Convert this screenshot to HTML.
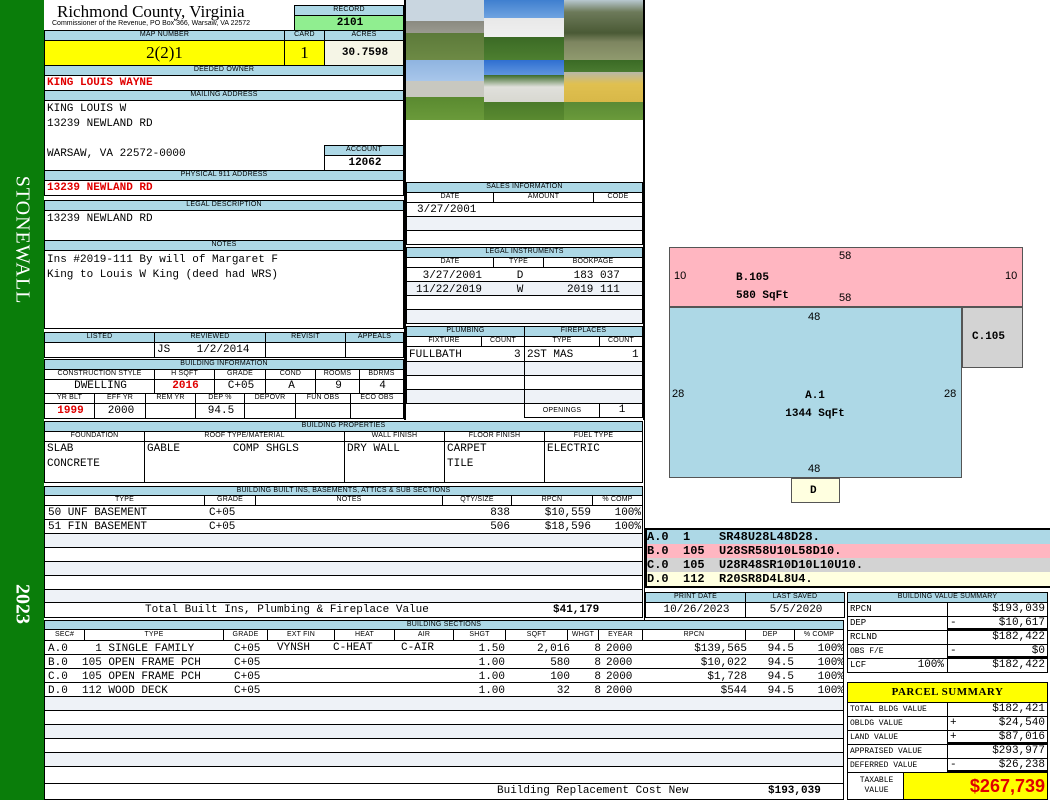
<!DOCTYPE html>
<html><head><meta charset="utf-8"><style>
*{margin:0;padding:0}
body{width:1050px;height:800px;position:relative;background:#fff;overflow:hidden;font-family:"Liberation Sans",sans-serif}
.b{position:absolute;box-sizing:border-box;border:1px solid #000;overflow:hidden;white-space:nowrap}
.h{background:#add8e6;font-size:7px;text-align:center;line-height:8px;letter-spacing:0.2px}
.m{font-family:"Liberation Mono",monospace;font-size:11px;line-height:12px;padding-left:2px}
.r{text-align:right;padding-right:2px}
.c{text-align:center}
.red{color:#e00000;font-weight:bold}
.a{position:absolute;white-space:nowrap}
.alt{background:#eef2f7}
.sk{font-family:"Liberation Mono",monospace;font-weight:bold;font-size:11px}
</style></head><body>
<div class="a" style="left:0;top:0;width:44px;height:800px;background:#0a7d0a"></div>
<div class="a" style="left:22px;top:240px;transform:translate(-50%,-50%) rotate(90deg);color:#fff;font:20px 'Liberation Serif',serif;letter-spacing:1px">STONEWALL</div>
<div class="a" style="left:22px;top:604px;transform:translate(-50%,-50%) rotate(90deg);color:#fff;font:bold 20px 'Liberation Serif',serif">2023</div>

<div class="a" style="left:57px;top:2px;font:17px 'Liberation Serif',serif">Richmond County, Virginia</div>
<div class="a" style="left:52px;top:20px;font:7px 'Liberation Sans'">Commissioner of the Revenue, PO Box 366, Warsaw, VA 22572</div>
<div class="b h" style="left:294px;top:5px;width:110px;height:11px">RECORD</div>
<div class="b m c" style="left:294px;top:15px;width:110px;height:16px;background:#90ee90;font-weight:bold;line-height:14px">2101</div>
<div class="b h" style="left:44px;top:30px;width:241px;height:11px">MAP NUMBER</div>
<div class="b h" style="left:284px;top:30px;width:41px;height:11px">CARD</div>
<div class="b h" style="left:324px;top:30px;width:80px;height:11px">ACRES</div>
<div class="b c" style="left:44px;top:40px;width:241px;height:26px;background:#ffff00;font:17px 'Liberation Serif',serif;line-height:24px">2(2)1</div>
<div class="b c" style="left:284px;top:40px;width:41px;height:26px;background:#ffff00;font:17px 'Liberation Serif',serif;line-height:24px">1</div>
<div class="b m c" style="left:324px;top:40px;width:80px;height:26px;background:#f5f5e6;font-weight:bold;line-height:24px">30.7598</div>
<div class="b h" style="left:44px;top:65px;width:360px;height:11px">DEEDED OWNER</div>
<div class="b m red" style="left:44px;top:75px;width:360px;height:16px;line-height:15px">KING LOUIS WAYNE</div>
<div class="b h" style="left:44px;top:90px;width:360px;height:11px">MAILING ADDRESS</div>
<div class="b m" style="left:44px;top:100px;width:360px;height:71px;line-height:15px;padding-top:1px">KING LOUIS W<br>13239 NEWLAND RD<br><br>WARSAW, VA 22572-0000</div>
<div class="b h" style="left:324px;top:145px;width:80px;height:11px">ACCOUNT</div>
<div class="b m c" style="left:324px;top:155px;width:80px;height:16px;font-weight:bold;line-height:14px">12062</div>
<div class="b h" style="left:44px;top:170px;width:360px;height:11px">PHYSICAL 911 ADDRESS</div>
<div class="b m red" style="left:44px;top:180px;width:360px;height:16px;line-height:15px">13239 NEWLAND RD</div>
<div class="b h" style="left:44px;top:200px;width:360px;height:11px">LEGAL DESCRIPTION</div>
<div class="b m" style="left:44px;top:210px;width:360px;height:31px;padding-top:2px">13239 NEWLAND RD</div>
<div class="b h" style="left:44px;top:240px;width:360px;height:11px">NOTES</div>
<div class="b m" style="left:44px;top:250px;width:360px;height:79px;padding-top:2px;line-height:15px">Ins #2019-111 By will of Margaret F<br>King to Louis W King (deed had WRS)</div>

<div class="b h" style="left:44px;top:332px;width:111px;height:11px">LISTED</div>
<div class="b h" style="left:154px;top:332px;width:112px;height:11px">REVIEWED</div>
<div class="b h" style="left:265px;top:332px;width:81px;height:11px">REVISIT</div>
<div class="b h" style="left:345px;top:332px;width:59px;height:11px">APPEALS</div>
<div class="b m" style="left:44px;top:342px;width:111px;height:16px"></div>
<div class="b m" style="left:154px;top:342px;width:112px;height:16px;line-height:14px">JS&nbsp;&nbsp;&nbsp;&nbsp;1/2/2014</div>
<div class="b m" style="left:265px;top:342px;width:81px;height:16px"></div>
<div class="b m" style="left:345px;top:342px;width:59px;height:16px"></div>

<div class="b h" style="left:44px;top:359px;width:360px;height:11px">BUILDING INFORMATION</div>
<div class="b h" style="left:44px;top:369px;width:111px;height:11px;background:#fff">CONSTRUCTION STYLE</div>
<div class="b h" style="left:154px;top:369px;width:61px;height:11px;background:#fff">H SQFT</div>
<div class="b h" style="left:214px;top:369px;width:52px;height:11px;background:#fff">GRADE</div>
<div class="b h" style="left:265px;top:369px;width:51px;height:11px;background:#fff">COND</div>
<div class="b h" style="left:315px;top:369px;width:45px;height:11px;background:#fff">ROOMS</div>
<div class="b h" style="left:359px;top:369px;width:45px;height:11px;background:#fff">BDRMS</div>
<div class="b m c" style="left:44px;top:379px;width:111px;height:15px">DWELLING</div>
<div class="b m c red" style="left:154px;top:379px;width:61px;height:15px">2016</div>
<div class="b m c" style="left:214px;top:379px;width:52px;height:15px">C+05</div>
<div class="b m c" style="left:265px;top:379px;width:51px;height:15px">A</div>
<div class="b m c" style="left:315px;top:379px;width:45px;height:15px">9</div>
<div class="b m c" style="left:359px;top:379px;width:45px;height:15px">4</div>
<div class="b h" style="left:44px;top:393px;width:51px;height:11px;background:#fff">YR BLT</div>
<div class="b h" style="left:94px;top:393px;width:52px;height:11px;background:#fff">EFF YR</div>
<div class="b h" style="left:145px;top:393px;width:51px;height:11px;background:#fff">REM YR</div>
<div class="b h" style="left:195px;top:393px;width:50px;height:11px;background:#fff">DEP %</div>
<div class="b h" style="left:244px;top:393px;width:52px;height:11px;background:#fff">DEPOVR</div>
<div class="b h" style="left:295px;top:393px;width:56px;height:11px;background:#fff">FUN OBS</div>
<div class="b h" style="left:350px;top:393px;width:54px;height:11px;background:#fff">ECO OBS</div>
<div class="b m c red" style="left:44px;top:403px;width:51px;height:16px;line-height:14px">1999</div>
<div class="b m c" style="left:94px;top:403px;width:52px;height:16px;line-height:14px">2000</div>
<div class="b m" style="left:145px;top:403px;width:51px;height:16px"></div>
<div class="b m c" style="left:195px;top:403px;width:50px;height:16px;line-height:14px">94.5</div>
<div class="b m" style="left:244px;top:403px;width:52px;height:16px"></div>
<div class="b m" style="left:295px;top:403px;width:56px;height:16px"></div>
<div class="b m" style="left:350px;top:403px;width:54px;height:16px"></div>

<div class="b h" style="left:44px;top:421px;width:599px;height:11px">BUILDING PROPERTIES</div>
<div class="b h" style="left:44px;top:431px;width:101px;height:11px;background:#fff">FOUNDATION</div>
<div class="b h" style="left:144px;top:431px;width:201px;height:11px;background:#fff">ROOF TYPE/MATERIAL</div>
<div class="b h" style="left:344px;top:431px;width:101px;height:11px;background:#fff">WALL FINISH</div>
<div class="b h" style="left:444px;top:431px;width:101px;height:11px;background:#fff">FLOOR FINISH</div>
<div class="b h" style="left:544px;top:431px;width:99px;height:11px;background:#fff">FUEL TYPE</div>
<div class="b m" style="left:44px;top:441px;width:101px;height:42px;line-height:15px">SLAB<br>CONCRETE</div>
<div class="b m" style="left:144px;top:441px;width:201px;height:42px;line-height:15px">GABLE&nbsp;&nbsp;&nbsp;&nbsp;&nbsp;&nbsp;&nbsp;&nbsp;COMP SHGLS</div>
<div class="b m" style="left:344px;top:441px;width:101px;height:42px;line-height:15px">DRY WALL</div>
<div class="b m" style="left:444px;top:441px;width:101px;height:42px;line-height:15px">CARPET<br>TILE</div>
<div class="b m" style="left:544px;top:441px;width:99px;height:42px;line-height:15px">ELECTRIC</div>

<div class="b h" style="left:44px;top:486px;width:599px;height:10px">BUILDING BUILT INS, BASEMENTS, ATTICS &amp; SUB SECTIONS</div>
<div class="b h" style="left:44px;top:495px;width:161px;height:11px;background:#fff">TYPE</div>
<div class="b h" style="left:204px;top:495px;width:52px;height:11px;background:#fff">GRADE</div>
<div class="b h" style="left:255px;top:495px;width:188px;height:11px;background:#fff">NOTES</div>
<div class="b h" style="left:442px;top:495px;width:70px;height:11px;background:#fff">QTY/SIZE</div>
<div class="b h" style="left:511px;top:495px;width:82px;height:11px;background:#fff">RPCN</div>
<div class="b h" style="left:592px;top:495px;width:51px;height:11px;background:#fff">% COMP</div>
<div class="b" style="left:44px;top:505px;width:599px;height:15px"></div>
<div class="b" style="left:44px;top:519px;width:599px;height:15px"></div>
<div class="b alt" style="left:44px;top:533px;width:599px;height:15px"></div>
<div class="b" style="left:44px;top:547px;width:599px;height:15px"></div>
<div class="b alt" style="left:44px;top:561px;width:599px;height:15px"></div>
<div class="b" style="left:44px;top:575px;width:599px;height:15px"></div>
<div class="b alt" style="left:44px;top:589px;width:599px;height:14px"></div>
<div class="a m" style="left:46px;top:507px">50 UNF BASEMENT</div>
<div class="a m" style="left:46px;top:521px">51 FIN BASEMENT</div>
<div class="a m" style="left:207px;top:507px">C+05</div>
<div class="a m" style="left:207px;top:521px">C+05</div>
<div class="a m r" style="left:442px;top:507px;width:66px">838</div>
<div class="a m r" style="left:442px;top:521px;width:66px">506</div>
<div class="a m r" style="left:511px;top:507px;width:78px">$10,559</div>
<div class="a m r" style="left:511px;top:521px;width:78px">$18,596</div>
<div class="a m r" style="left:592px;top:507px;width:47px">100%</div>
<div class="a m r" style="left:592px;top:521px;width:47px">100%</div>
<div class="b m" style="left:44px;top:602px;width:599px;height:16px;line-height:15px"><span style="position:absolute;left:100px">Total Built Ins, Plumbing &amp; Fireplace Value</span><span style="position:absolute;left:508px;font-weight:bold">$41,179</span></div>

<div class="b h" style="left:44px;top:620px;width:800px;height:10px">BUILDING SECTIONS</div>
<div class="b h" style="left:44px;top:629px;width:41px;height:12px;background:#fff;line-height:10px">SEC#</div>
<div class="b h" style="left:84px;top:629px;width:140px;height:12px;background:#fff;line-height:10px">TYPE</div>
<div class="b h" style="left:223px;top:629px;width:45px;height:12px;background:#fff;line-height:10px">GRADE</div>
<div class="b h" style="left:267px;top:629px;width:68px;height:12px;background:#fff;line-height:10px">EXT FIN</div>
<div class="b h" style="left:334px;top:629px;width:61px;height:12px;background:#fff;line-height:10px">HEAT</div>
<div class="b h" style="left:394px;top:629px;width:60px;height:12px;background:#fff;line-height:10px">AIR</div>
<div class="b h" style="left:453px;top:629px;width:53px;height:12px;background:#fff;line-height:10px">SHGT</div>
<div class="b h" style="left:505px;top:629px;width:63px;height:12px;background:#fff;line-height:10px">SQFT</div>
<div class="b h" style="left:567px;top:629px;width:32px;height:12px;background:#fff;line-height:10px">WHGT</div>
<div class="b h" style="left:598px;top:629px;width:45px;height:12px;background:#fff;line-height:10px">EYEAR</div>
<div class="b h" style="left:642px;top:629px;width:104px;height:12px;background:#fff;line-height:10px">RPCN</div>
<div class="b h" style="left:745px;top:629px;width:50px;height:12px;background:#fff;line-height:10px">DEP</div>
<div class="b h" style="left:794px;top:629px;width:50px;height:12px;background:#fff;line-height:10px">% COMP</div>
<div class="b" style="left:44px;top:640px;width:800px;height:15px"></div>
<div class="b" style="left:44px;top:654px;width:800px;height:15px"></div>
<div class="b" style="left:44px;top:668px;width:800px;height:15px"></div>
<div class="b" style="left:44px;top:682px;width:800px;height:15px"></div>
<div class="b alt" style="left:44px;top:696px;width:800px;height:15px"></div>
<div class="b" style="left:44px;top:710px;width:800px;height:15px"></div>
<div class="b alt" style="left:44px;top:724px;width:800px;height:15px"></div>
<div class="b" style="left:44px;top:738px;width:800px;height:15px"></div>
<div class="b alt" style="left:44px;top:752px;width:800px;height:15px"></div>
<div class="b" style="left:44px;top:766px;width:800px;height:18px"></div>
<div class="b" style="left:44px;top:783px;width:800px;height:17px"></div>
<div class="a m" style="left:46px;top:642px;line-height:14px">A.0<br>B.0<br>C.0<br>D.0</div>
<div class="a m" style="left:80px;top:642px;line-height:14px">&nbsp;&nbsp;1 SINGLE FAMILY<br>105 OPEN FRAME PCH<br>105 OPEN FRAME PCH<br>112 WOOD DECK</div>
<div class="a m" style="left:232px;top:642px;line-height:14px">C+05<br>C+05<br>C+05<br>C+05</div>
<div class="a m" style="left:275px;top:642px">VYNSH</div>
<div class="a m" style="left:331px;top:642px">C-HEAT</div>
<div class="a m" style="left:399px;top:642px">C-AIR</div>
<div class="a m r" style="left:453px;top:642px;width:50px;line-height:14px">1.50<br>1.00<br>1.00<br>1.00</div>
<div class="a m r" style="left:505px;top:642px;width:63px;line-height:14px">2,016<br>580<br>100<br>32</div>
<div class="a m r" style="left:567px;top:642px;width:32px;line-height:14px">8<br>8<br>8<br>8</div>
<div class="a m" style="left:604px;top:642px;line-height:14px">2000<br>2000<br>2000<br>2000</div>
<div class="a m r" style="left:642px;top:642px;width:103px;line-height:14px">$139,565<br>$10,022<br>$1,728<br>$544</div>
<div class="a m r" style="left:745px;top:642px;width:47px;line-height:14px">94.5<br>94.5<br>94.5<br>94.5</div>
<div class="a m r" style="left:794px;top:642px;width:48px;line-height:14px">100%<br>100%<br>100%<br>100%</div>
<div class="a m" style="left:495px;top:785px">Building Replacement Cost New</div>
<div class="a m" style="left:766px;top:785px;font-weight:bold">$193,039</div>

<div class="a" style="left:404px;top:0;width:80px;height:60px;background:linear-gradient(#c9d6e0 0,#c9d6e0 35%,#8a8a80 35%,#9a9a90 55%,#5c7a3a 55%,#6d8a45 100%)"></div>
<div class="a" style="left:484px;top:0;width:80px;height:60px;background:linear-gradient(#3f7fcf 0,#6fa3e0 30%,#e8e8e8 30%,#f0f0f0 62%,#3b6a25 62%,#4d7f30 100%)"></div>
<div class="a" style="left:564px;top:0;width:80px;height:60px;background:linear-gradient(#b8c8d0 0,#6d7a5a 20%,#4a5a35 55%,#7d8560 70%,#8f9a6e 100%)"></div>
<div class="a" style="left:404px;top:60px;width:80px;height:60px;background:linear-gradient(#8fb4e0 0,#a8c6ea 35%,#c8c8c0 35%,#c8c8c0 62%,#5a8a30 62%,#6a9a3a 100%)"></div>
<div class="a" style="left:484px;top:60px;width:80px;height:60px;background:linear-gradient(#2f6fd0 0,#5f95e0 25%,#3a6a2a 25%,#e0e0dc 45%,#d8d8d0 70%,#4a7a2a 70%,#5a8a30 100%)"></div>
<div class="a" style="left:564px;top:60px;width:80px;height:60px;background:linear-gradient(#3a6a25 0,#4a7a30 20%,#b8b8a8 20%,#e0c050 40%,#d8b848 70%,#5a8a35 70%,#6a9a3a 100%)"></div>

<div class="b h" style="left:406px;top:182px;width:237px;height:11px">SALES INFORMATION</div>
<div class="b h" style="left:406px;top:192px;width:88px;height:11px;background:#fff">DATE</div>
<div class="b h" style="left:493px;top:192px;width:101px;height:11px;background:#fff">AMOUNT</div>
<div class="b h" style="left:593px;top:192px;width:50px;height:11px;background:#fff">CODE</div>
<div class="b m" style="left:406px;top:202px;width:237px;height:15px;padding-left:10px;line-height:14px">3/27/2001</div>
<div class="b alt" style="left:406px;top:216px;width:237px;height:15px"></div>
<div class="b" style="left:406px;top:230px;width:237px;height:15px"></div>
<div class="b h" style="left:406px;top:247px;width:237px;height:11px">LEGAL INSTRUMENTS</div>
<div class="b h" style="left:406px;top:257px;width:88px;height:11px;background:#fff">DATE</div>
<div class="b h" style="left:493px;top:257px;width:51px;height:11px;background:#fff">TYPE</div>
<div class="b h" style="left:543px;top:257px;width:100px;height:11px;background:#fff">BOOKPAGE</div>
<div class="b" style="left:406px;top:267px;width:237px;height:15px"></div>
<div class="b alt" style="left:406px;top:281px;width:237px;height:15px"></div>
<div class="b" style="left:406px;top:295px;width:237px;height:15px"></div>
<div class="b alt" style="left:406px;top:309px;width:237px;height:15px"></div>
<div class="a m" style="left:414px;top:269px;line-height:14px">&nbsp;3/27/2001<br>11/22/2019</div>
<div class="a m c" style="left:493px;top:269px;width:50px;line-height:14px">D<br>W</div>
<div class="a m" style="left:565px;top:269px;line-height:14px">&nbsp;183 037<br>2019 111</div>

<div class="b h" style="left:406px;top:326px;width:119px;height:11px">PLUMBING</div>
<div class="b h" style="left:524px;top:326px;width:119px;height:11px">FIREPLACES</div>
<div class="b h" style="left:406px;top:336px;width:76px;height:11px;background:#fff">FIXTURE</div>
<div class="b h" style="left:481px;top:336px;width:44px;height:11px;background:#fff">COUNT</div>
<div class="b h" style="left:524px;top:336px;width:76px;height:11px;background:#fff">TYPE</div>
<div class="b h" style="left:599px;top:336px;width:44px;height:11px;background:#fff">COUNT</div>
<div class="b" style="left:406px;top:346px;width:119px;height:16px"></div>
<div class="b alt" style="left:406px;top:361px;width:119px;height:15px"></div>
<div class="b" style="left:406px;top:375px;width:119px;height:15px"></div>
<div class="b alt" style="left:406px;top:389px;width:119px;height:15px"></div>
<div class="b" style="left:524px;top:346px;width:119px;height:16px"></div>
<div class="b alt" style="left:524px;top:361px;width:119px;height:15px"></div>
<div class="b" style="left:524px;top:375px;width:119px;height:15px"></div>
<div class="b alt" style="left:524px;top:389px;width:119px;height:15px"></div>
<div class="a m" style="left:407px;top:349px">FULLBATH</div>
<div class="a m" style="left:512px;top:349px">3</div>
<div class="a m" style="left:525px;top:349px">2ST MAS</div>
<div class="a m" style="left:630px;top:349px">1</div>
<div class="b h" style="left:524px;top:403px;width:76px;height:15px;background:#fff;line-height:13px">OPENINGS</div>
<div class="b m c" style="left:599px;top:403px;width:44px;height:15px">1</div>
<div class="a" style="left:404px;top:0;width:2px;height:420px;background:#000"></div>
<div class="a" style="left:643px;top:0;width:2px;height:420px;background:#000"></div>
<div class="a" style="left:644px;top:420px;width:1px;height:200px;background:#000"></div>

<div class="a" style="left:669px;top:247px;width:354px;height:60px;background:#ffb6c1;border:1px solid #555;box-sizing:border-box"></div>
<div class="a" style="left:669px;top:307px;width:293px;height:171px;background:#add8e6;border:1px solid #555;box-sizing:border-box"></div>
<div class="a" style="left:962px;top:307px;width:61px;height:61px;background:#d3d3d3;border:1px solid #555;box-sizing:border-box"></div>
<div class="a" style="left:791px;top:478px;width:49px;height:25px;background:#ffffe0;border:1px solid #555;box-sizing:border-box"></div>
<div class="a" style="left:839px;top:250px;font:11px 'Liberation Sans'">58</div>
<div class="a" style="left:839px;top:292px;font:11px 'Liberation Sans'">58</div>
<div class="a" style="left:674px;top:270px;font:11px 'Liberation Sans'">10</div>
<div class="a" style="left:1005px;top:270px;font:11px 'Liberation Sans'">10</div>
<div class="a sk" style="left:736px;top:269px;line-height:18px">B.105<br>580 SqFt</div>
<div class="a" style="left:808px;top:311px;font:11px 'Liberation Sans'">48</div>
<div class="a" style="left:808px;top:463px;font:11px 'Liberation Sans'">48</div>
<div class="a" style="left:672px;top:388px;font:11px 'Liberation Sans'">28</div>
<div class="a" style="left:944px;top:388px;font:11px 'Liberation Sans'">28</div>
<div class="a sk c" style="left:760px;top:387px;width:110px;line-height:18px">A.1<br>1344 SqFt</div>
<div class="a sk" style="left:972px;top:331px">C.105</div>
<div class="a sk" style="left:810px;top:485px">D</div>

<div class="b" style="left:645px;top:528px;width:405px;height:60px;border-width:2px"></div>
<div class="a sk" style="left:647px;top:530px;width:403px;height:14px;background:#add8e6;line-height:14px;font-size:12px">A.0&nbsp;&nbsp;1&nbsp;&nbsp;&nbsp;&nbsp;SR48U28L48D28.</div>
<div class="a sk" style="left:647px;top:544px;width:403px;height:14px;background:#ffb6c1;line-height:14px;font-size:12px">B.0&nbsp;&nbsp;105&nbsp;&nbsp;U28SR58U10L58D10.</div>
<div class="a sk" style="left:647px;top:558px;width:403px;height:14px;background:#d3d3d3;line-height:14px;font-size:12px">C.0&nbsp;&nbsp;105&nbsp;&nbsp;U28R48SR10D10L10U10.</div>
<div class="a sk" style="left:647px;top:572px;width:403px;height:14px;background:#ffffe0;line-height:14px;font-size:12px">D.0&nbsp;&nbsp;112&nbsp;&nbsp;R20SR8D4L8U4.</div>

<div class="b h" style="left:645px;top:592px;width:101px;height:11px">PRINT DATE</div>
<div class="b h" style="left:745px;top:592px;width:100px;height:11px">LAST SAVED</div>
<div class="b m c" style="left:645px;top:602px;width:101px;height:16px;line-height:14px">10/26/2023</div>
<div class="b m c" style="left:745px;top:602px;width:100px;height:16px;line-height:14px">5/5/2020</div>

<div class="b h" style="left:847px;top:592px;width:201px;height:11px">BUILDING VALUE SUMMARY</div>
<div class="b m" style="left:847px;top:602px;width:101px;height:15px;font-size:9px;line-height:13px">RPCN</div>
<div class="b m r" style="left:947px;top:602px;width:101px;height:15px;line-height:13px">$193,039</div>
<div class="b m" style="left:847px;top:616px;width:101px;height:15px;font-size:9px;line-height:13px">DEP</div>
<div class="b m r" style="left:947px;top:616px;width:101px;height:15px;line-height:13px;border-bottom:3px solid #000"><span style="float:left">-</span>$10,617</div>
<div class="b m" style="left:847px;top:630px;width:101px;height:15px;font-size:9px;line-height:13px">RCLND</div>
<div class="b m r" style="left:947px;top:630px;width:101px;height:15px;line-height:13px">$182,422</div>
<div class="b m" style="left:847px;top:644px;width:101px;height:15px;font-size:8px;line-height:13px">OBS F/E</div>
<div class="b m r" style="left:947px;top:644px;width:101px;height:15px;line-height:13px;border-bottom:3px solid #000"><span style="float:left">-</span>$0</div>
<div class="b m" style="left:847px;top:658px;width:101px;height:15px;font-size:9px;line-height:13px">LCF<span style="position:absolute;right:3px;font-size:11px">100%</span></div>
<div class="b m r" style="left:947px;top:658px;width:101px;height:15px;line-height:13px">$182,422</div>

<div class="b c" style="left:847px;top:682px;width:201px;height:21px;background:#ffff00;font:bold 11px 'Liberation Serif',serif;line-height:19px;letter-spacing:0.5px">PARCEL SUMMARY</div>
<div class="b m" style="left:847px;top:702px;width:101px;height:15px;font-size:8px;line-height:13px">TOTAL BLDG VALUE</div>
<div class="b m r" style="left:947px;top:702px;width:101px;height:15px;line-height:13px">$182,421</div>
<div class="b m" style="left:847px;top:716px;width:101px;height:15px;font-size:8px;line-height:13px">OBLDG VALUE</div>
<div class="b m r" style="left:947px;top:716px;width:101px;height:15px;line-height:13px"><span style="float:left">+</span>$24,540</div>
<div class="b m" style="left:847px;top:730px;width:101px;height:15px;font-size:8px;line-height:13px">LAND VALUE</div>
<div class="b m r" style="left:947px;top:730px;width:101px;height:15px;line-height:13px;border-bottom:3px solid #000"><span style="float:left">+</span>$87,016</div>
<div class="b m" style="left:847px;top:744px;width:101px;height:15px;font-size:8px;line-height:13px">APPRAISED VALUE</div>
<div class="b m r" style="left:947px;top:744px;width:101px;height:15px;line-height:13px">$293,977</div>
<div class="b m" style="left:847px;top:758px;width:101px;height:15px;font-size:8px;line-height:13px">DEFERRED VALUE</div>
<div class="b m r" style="left:947px;top:758px;width:101px;height:15px;line-height:13px;border-bottom:3px solid #000"><span style="float:left">-</span>$26,238</div>
<div class="b m c" style="left:847px;top:772px;width:57px;height:28px;font-size:8px;line-height:10px;padding-top:3px">TAXABLE<br>VALUE</div>
<div class="b r" style="left:903px;top:772px;width:145px;height:28px;background:#ffff00;color:#e00000;font:bold 18px 'Liberation Sans',sans-serif;line-height:26px">$267,739</div>
</body></html>
